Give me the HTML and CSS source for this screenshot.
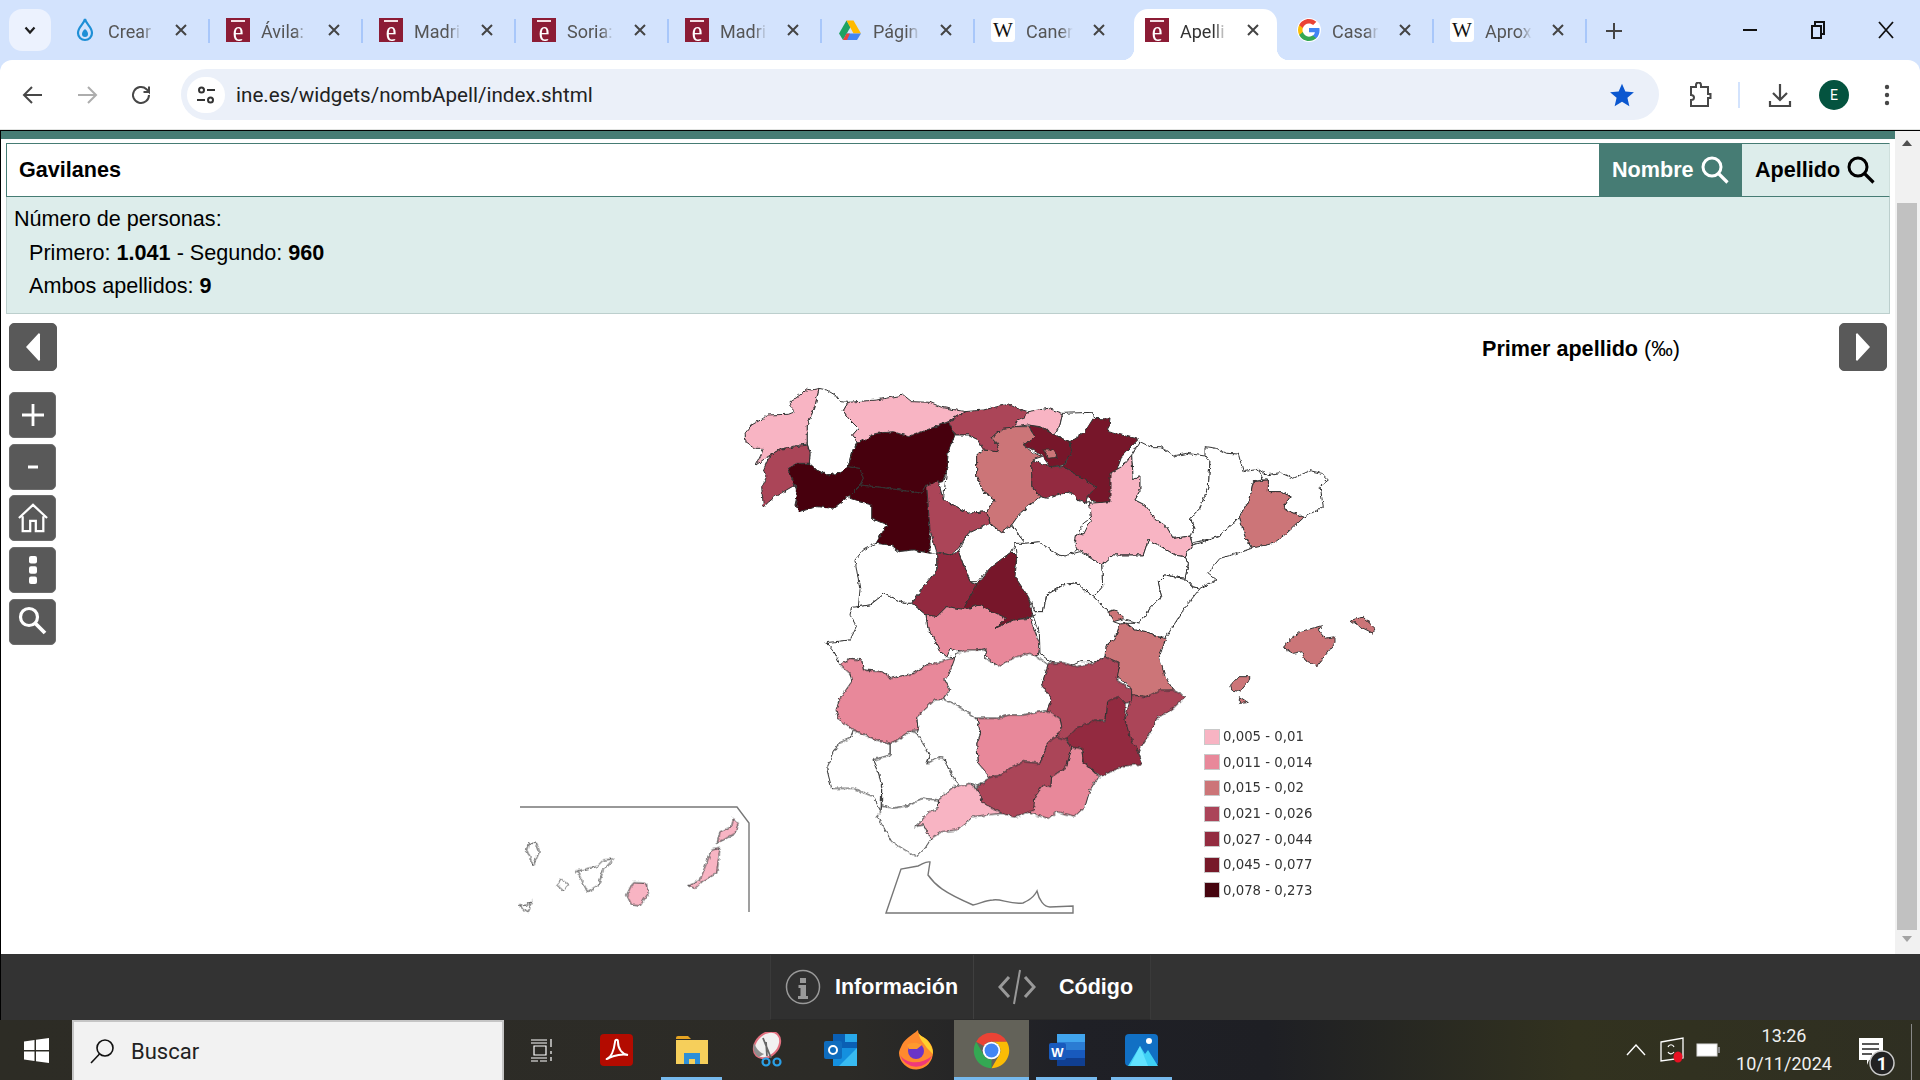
FILE: index.html
```html
<!DOCTYPE html>
<html lang="es">
<head>
<meta charset="utf-8">
<title>Apellidos</title>
<link rel="stylesheet" href="styles.css">
</head>
<body>
<div class="screen">

  <header class="tabstrip">
    <button class="tab-menu"><svg width="16" height="16" viewBox="0 0 16 16"><path d="M3.5 5.5 8 10.5l4.500-5" fill="none" stroke="#1f1f1f" stroke-width="2.200"/></svg></button>
    <div class="tabs">
      <div class="tab sep"><svg class="fav" viewBox="0 0 24 24"><path d="M12 1c1 5 7 8 7 14a7 7 0 0 1-14 0c0-6 6-9 7-14z" fill="none" stroke="#1e8fd6" stroke-width="2.200"/><path d="M12 11c2 2 3 3 3 5a3 3 0 0 1-6 0c0-2 1-3 3-5z" fill="#1e8fd6"/></svg><span class="tab-title">Crear</span><svg class="tab-x" viewBox="0 0 12 12"><path d="M1 1l10 10M11 1 1 11"/></svg></div>
      <div class="tab sep"><span class="fav fav-ine"><span class="fav-e">e</span></span><span class="tab-title">Ávila:</span><svg class="tab-x" viewBox="0 0 12 12"><path d="M1 1l10 10M11 1 1 11"/></svg></div>
      <div class="tab sep"><span class="fav fav-ine"><span class="fav-e">e</span></span><span class="tab-title">Madri</span><svg class="tab-x" viewBox="0 0 12 12"><path d="M1 1l10 10M11 1 1 11"/></svg></div>
      <div class="tab sep"><span class="fav fav-ine"><span class="fav-e">e</span></span><span class="tab-title">Soria:</span><svg class="tab-x" viewBox="0 0 12 12"><path d="M1 1l10 10M11 1 1 11"/></svg></div>
      <div class="tab sep"><span class="fav fav-ine"><span class="fav-e">e</span></span><span class="tab-title">Madri</span><svg class="tab-x" viewBox="0 0 12 12"><path d="M1 1l10 10M11 1 1 11"/></svg></div>
      <div class="tab sep"><svg class="fav" viewBox="0 0 24 24"><path d="M8.500 2.500 1 15.500 5 22 12.500 9z" fill="#1ea362"/><path d="M8.500 2.500h7L23 15.500h-7.500z" fill="#ffba00"/><path d="M8.500 15.500H23L19 22H5z" fill="#4285f4"/><path d="M5 22l3.500-6.500H12L9 22z" fill="#e8473a"/></svg><span class="tab-title">Págin</span><svg class="tab-x" viewBox="0 0 12 12"><path d="M1 1l10 10M11 1 1 11"/></svg></div>
      <div class="tab"><span class="fav fav-wiki">W</span><span class="tab-title">Caner</span><svg class="tab-x" viewBox="0 0 12 12"><path d="M1 1l10 10M11 1 1 11"/></svg></div>
      <div class="tab active"><span class="fav fav-ine"><span class="fav-e">e</span></span><span class="tab-title">Apelli</span><svg class="tab-x" viewBox="0 0 12 12"><path d="M1 1l10 10M11 1 1 11"/></svg></div>
      <div class="tab sep"><svg class="fav fav-g" viewBox="0 0 24 24"><path fill="#4285F4" d="M22.560 12.250c0-.78-.07-1.530-.2-2.250H12v4.260h5.920c-.26 1.370-1.040 2.530-2.210 3.310v2.770h3.570c2.080-1.920 3.280-4.740 3.280-8.090z"/><path fill="#34A853" d="M12 23c2.970 0 5.460-.98 7.280-2.660l-3.570-2.770c-.98.66-2.230 1.060-3.710 1.060-2.860 0-5.290-1.930-6.160-4.530H2.180v2.840C3.990 20.530 7.700 23 12 23z"/><path fill="#FBBC05" d="M5.840 14.090c-.22-.66-.35-1.360-.35-2.090s.13-1.430.35-2.090V7.070H2.180C1.430 8.550 1 10.220 1 12s.43 3.450 1.180 4.930l3.660-2.840z"/><path fill="#EA4335" d="M12 5.380c1.620 0 3.060.56 4.210 1.640l3.150-3.150C17.450 2.090 14.970 1 12 1 7.700 1 3.990 3.470 2.180 7.070l3.660 2.840c.87-2.600 3.300-4.530 6.160-4.530z"/></svg><span class="tab-title">Casar</span><svg class="tab-x" viewBox="0 0 12 12"><path d="M1 1l10 10M11 1 1 11"/></svg></div>
      <div class="tab sep"><span class="fav fav-wiki">W</span><span class="tab-title">Aprox</span><svg class="tab-x" viewBox="0 0 12 12"><path d="M1 1l10 10M11 1 1 11"/></svg></div>
    </div>
    <button class="new-tab"><svg width="20" height="20" viewBox="0 0 20 20"><path d="M10 2v16M2 10h16" stroke="#444" stroke-width="2"/></svg></button>
    <div class="win-controls">
      <span class="win-btn"><svg width="16" height="16" viewBox="0 0 16 16"><path d="M1 8h14" stroke="#111" stroke-width="2"/></svg></span>
      <span class="win-btn"><svg width="16" height="18" viewBox="0 0 16 18"><path d="M2 5h9v12H2zM5 5V1h9v12h-3" fill="none" stroke="#111" stroke-width="2"/></svg></span>
      <span class="win-btn"><svg width="18" height="18" viewBox="0 0 18 18"><path d="M2 1l14 16M16 1 2 17" stroke="#111" stroke-width="1.800"/></svg></span>
    </div>
  </header>

  <nav class="toolbar">
    <span class="nav-btn"><svg width="24" height="24" viewBox="0 0 24 24"><path d="M21 12H4M11 4l-8 8 8 8" fill="none" stroke="#474747" stroke-width="2"/></svg></span>
    <span class="nav-btn"><svg width="24" height="24" viewBox="0 0 24 24"><path d="M3 12h17M13 4l8 8-8 8" fill="none" stroke="#adadad" stroke-width="2"/></svg></span>
    <span class="nav-btn"><svg width="24" height="24" viewBox="0 0 24 24"><path d="M20 12a8 8 0 1 1-2.500-5.800L20 9V3.500M20 9h-5.500" fill="none" stroke="#474747" stroke-width="2"/></svg></span>
    <div class="omnibox">
      <span class="site-info"><svg width="22" height="22" viewBox="0 0 22 22"><circle cx="6.500" cy="6" r="2.500" fill="none" stroke="#333" stroke-width="2"/><path d="M12 6h8M2 16h8" stroke="#333" stroke-width="2"/><circle cx="15.500" cy="16" r="2.500" fill="none" stroke="#333" stroke-width="2"/></svg></span>
      <span class="url">ine.es/widgets/nombApell/index.shtml</span>
      <svg class="star" width="26" height="26" viewBox="0 0 24 24"><path d="M12 1.500l3.100 7.200 7.900.7-6 5.200 1.800 7.700L12 18.200l-6.800 4.100L7 14.600l-6-5.200 7.900-.7z" fill="#0b57d0"/></svg>
    </div>
    <span class="tb-ext"><svg width="26" height="26" viewBox="0 0 26 26"><path d="M4 5h5V3a2.500 2.500 0 0 1 5 0v2h7v7h2.500v4H21v8H4v-6c2 0 3-1 3-2.500S6 13 4 13z" fill="none" stroke="#474747" stroke-width="2"/></svg></span>
    <span class="tb-sep"></span>
    <span class="tb-dl"><svg width="26" height="26" viewBox="0 0 26 26"><path d="M13 2v15M6 11l7 7 7-7M3 19v5h20v-5" fill="none" stroke="#474747" stroke-width="2.200"/></svg></span>
    <span class="avatar">E</span>
    <span class="tb-menu"><svg width="6" height="24" viewBox="0 0 6 24"><circle cx="3" cy="4" r="2.200" fill="#474747"/><circle cx="3" cy="12" r="2.200" fill="#474747"/><circle cx="3" cy="20" r="2.200" fill="#474747"/></svg></span>
  </nav>

  <div class="viewport">
    <div class="viewport-row">
      <main class="page">
        <div class="teal-strip"></div>
        <section class="widget-head">
          <div class="search-row">
            <div class="search-name">Gavilanes</div>
            <div class="search-btn search-on">Nombre
              <svg width="28" height="28" viewBox="0 0 28 28"><circle cx="11" cy="11" r="9" fill="none" stroke="#fff" stroke-width="3"/><path d="M17.500 17.500l9 9" stroke="#fff" stroke-width="3.200"/></svg>
            </div>
            <div class="search-btn search-off">Apellido
              <svg width="28" height="28" viewBox="0 0 28 28"><circle cx="11" cy="11" r="9" fill="none" stroke="#000" stroke-width="3"/><path d="M17.500 17.500l9 9" stroke="#000" stroke-width="3.200"/></svg>
            </div>
          </div>
          <div class="info-box">
            <p class="info-line">Número de personas:</p>
            <p class="info-line indent">Primero: <b>1.041</b> - Segundo: <b>960</b></p>
            <p class="info-line indent">Ambos apellidos: <b>9</b></p>
          </div>
        </section>

        <section class="map-area">
          <svg class="map" viewBox="1 314 1894 640" aria-hidden="true">
            <defs>
              <filter id="rough" filterUnits="userSpaceOnUse" x="480" y="360" width="1000" height="580">
                <feTurbulence type="fractalNoise" baseFrequency="0.22" numOctaves="2" seed="4" result="n"/>
                <feDisplacementMap in="SourceGraphic" in2="n" scale="4" xChannelSelector="R" yChannelSelector="G"/>
              </filter>
            </defs>
            <g filter="url(#rough)">
              <g class="z" transform="translate(720 370) scale(.33333)">
                <polygon class="c1" points="297,55 275,60 262,58 240,75 210,95 215,115 225,125 205,133 140,135 130,145 95,165 75,190 78,215 105,235 130,235 125,250 108,285 140,262 180,238 240,225 262,222 262,165 285,110"/>
                <polygon class="c0" points="297,55 320,60 345,75 360,95 385,97 370,122 385,145 415,175 398,195 415,215 395,245 385,290 360,310 320,315 290,300 268,280 270,250 262,222 262,165 285,110"/>
                <polygon class="c4" points="262,225 180,238 150,255 130,300 140,320 125,350 130,410 165,380 225,345 203,295 230,280 268,280 270,250"/>
                <polygon class="c7" points="203,295 230,282 268,280 290,300 320,315 360,310 385,290 420,295 430,325 420,345 390,375 370,392 340,415 290,410 240,425 225,405 232,375 225,345"/>
                <polygon class="c7" points="415,218 470,190 520,185 565,200 620,180 685,155 705,195 685,245 680,300 668,335 620,345 605,370 540,360 480,352 420,345 430,325 420,295 385,290 395,245"/>
                <polygon class="c7" points="420,345 480,352 540,360 605,370 620,345 630,480 630,550 580,540 535,545 510,525 468,520 500,465 455,445 455,405 420,395 390,385 390,375"/>
                <polygon class="c1" points="385,97 470,90 550,75 575,95 630,97 665,112 735,125 685,155 620,180 565,200 520,185 470,190 415,218 398,195 415,175 385,145 370,122"/>
                <polygon class="c4" points="735,125 790,120 865,102 890,115 925,125 910,145 888,155 888,170 850,175 815,205 835,225 830,245 790,240 775,210 745,195 705,195 685,155"/>
                <polygon class="c1" points="925,125 985,115 1028,130 1020,165 1005,195 960,170 925,165 888,170 888,155 910,145"/>
                <polygon class="c0" points="1028,130 1115,127 1125,145 1095,185 1050,215 1005,195 1020,165"/>
                <polygon class="c6" points="925,165 960,172 1005,195 1050,215 1055,245 1030,285 990,290 965,255 930,235 910,225 945,200"/>
                <polygon class="c3" points="970,240 1000,240 1015,262 985,265"/>
                <polygon class="c6" points="1120,145 1170,147 1165,185 1255,208 1205,260 1180,330 1170,395 1130,400 1100,380 1130,352 1080,320 1030,290 1055,245 1050,215 1095,185"/>
                <polygon class="c5" points="935,270 990,290 1030,290 1080,320 1130,352 1100,380 1100,400 1070,390 1055,365 1010,375 980,385 960,380 935,350"/>
                <polygon class="c0" points="705,195 745,195 775,210 790,240 770,255 770,320 790,365 825,390 800,425 745,430 710,410 670,390 680,300 685,245"/>
                <polygon class="c3" points="850,175 888,170 925,170 945,200 910,225 935,245 965,260 935,270 935,350 960,380 900,430 875,465 845,488 810,460 800,425 825,390 790,365 770,320 770,255 790,240 830,245 835,225 815,205"/>
                <polygon class="c4" points="620,345 655,335 670,390 710,410 745,430 800,425 810,460 745,490 715,535 690,555 650,545 630,480"/>
                <polygon class="c0" points="1115,395 1115,440 1085,465 1075,490 1065,515 1070,540 1040,560 1000,550 960,520 915,520 875,465 900,430 960,380 980,385 1010,375 1055,365 1070,390 1100,400"/>
                <polygon class="c0" points="715,545 745,490 810,460 845,488 875,465 915,520 885,525 875,545 815,590 770,635 750,635"/>
                <polygon class="c5" points="650,548 690,555 715,545 750,635 770,645 730,718 680,710 650,740 618,735 575,700 610,650 650,600"/>
                <polygon class="c0" points="468,520 510,525 535,545 580,540 630,550 650,548 650,600 610,650 575,700 550,700 495,670 450,705 415,710 420,660 405,570 430,540"/>
                <polygon class="c2" points="618,735 650,740 680,710 730,718 780,705 860,745 825,775 880,750 930,745 960,825 955,855 900,870 835,890 800,860 795,835 730,850 690,835 680,860 655,840 640,795 625,785"/>
                <polygon class="c6" points="875,545 890,560 885,610 925,680 940,740 880,750 825,775 860,745 780,705 730,718 770,645 815,590"/>
                <polygon class="c0" points="395,712 415,710 450,705 495,670 550,700 575,700 618,735 625,785 640,795 655,840 680,860 715,865 665,880 620,885 580,910 515,925 485,905 430,900 425,870 390,865 360,885 345,850 318,818 390,810 410,770 390,735"/>
              </g>
              <g class="z" transform="translate(1000 430) scale(.33333)">
                <polygon class="c1" points="395,75 400,150 420,135 420,185 405,210 435,225 465,265 500,290 520,325 570,318 578,345 555,380 525,375 475,345 445,330 430,375 390,375 340,375 305,405 255,370 225,350 230,310 250,315 275,265 268,220 330,215 330,130 365,110"/>
                <polygon class="c0" points="420,35 450,50 480,50 520,78 560,70 615,78 630,95 625,170 600,235 570,265 585,295 570,318 520,325 500,290 465,265 435,225 405,210 420,185 420,135 400,150 395,75"/>
                <polygon class="c0" points="615,50 650,55 680,70 715,72 730,125 775,118 790,150 760,155 750,205 718,260 690,290 655,320 580,338 578,345 570,318 585,295 570,265 600,235 625,170 630,95 615,78"/>
                <polygon class="c0" points="775,118 800,135 840,128 880,145 930,122 965,130 985,150 960,170 970,230 912,262 850,235 870,200 845,185 805,185 805,150 790,150"/>
                <polygon class="c3" points="760,155 805,150 805,185 845,185 870,200 850,235 912,262 860,310 820,340 755,355 735,320 718,260 750,205"/>
                <polygon class="c0" points="718,260 735,320 755,355 695,375 660,385 622,430 648,450 600,475 575,470 555,445 565,400 555,380 578,345 655,320 690,290"/>
                <polygon class="c0" points="305,405 340,375 390,375 430,375 445,330 475,345 525,375 555,380 565,400 555,445 520,440 495,435 475,455 485,500 450,535 435,560 410,580 375,570 340,540 325,545 280,500 308,470"/>
                <polygon class="c0" points="475,455 495,435 520,440 555,445 575,470 600,475 550,540 498,622 470,620 440,605 405,600 380,580 410,580 435,560 450,535 485,500"/>
                <polygon class="c3" points="325,545 345,540 375,565 340,575"/>
                <polygon class="c3" points="360,582 380,580 405,600 440,605 470,620 498,625 478,680 495,740 520,780 480,785 440,800 395,795 390,770 350,740 360,700 315,680 318,650 345,625"/>
                <polygon class="c0" points="45,340 75,340 115,335 185,380 240,365 305,405 308,470 280,500 265,490 230,458 190,465 140,495 130,545 105,545 85,500 45,440 50,390"/>
                <polygon class="c0" points="100,560 105,545 130,545 140,495 190,465 230,458 265,490 280,500 325,545 340,575 360,582 345,625 318,650 315,680 285,695 240,695 205,712 150,695 120,670 118,610"/>
                <polygon class="c3" points="848,650 900,605 965,587 955,600 975,625 1005,620 1005,640 950,708 915,690 905,665 880,670"/>
                <polygon class="c3" points="1052,570 1090,562 1125,595 1120,610 1080,590"/>
                <polygon class="c3" points="692,765 715,740 750,740 745,755 720,785 695,780"/>
                <polygon class="c3" points="718,800 745,818 718,820"/>
              </g>
              <g class="z" transform="translate(810 640) scale(.33333)">
                <polygon class="c4" points="965,165 1010,170 1050,150 1090,150 1125,170 1090,205 1040,235 1025,270 1000,310 985,335 955,285 945,240 955,200"/>
                <polygon class="c2" points="90,75 120,55 155,60 160,90 215,95 245,115 310,100 350,75 395,65 445,50 420,95 405,120 420,150 400,178 375,180 320,232 325,270 300,272 262,300 240,310 200,300 130,270 85,235 78,210 90,175 125,125 120,100"/>
                <polygon class="c0" points="440,40 470,30 530,30 525,55 565,78 620,50 660,40 695,60 715,75 695,135 725,175 710,212 640,225 600,225 560,235 500,235 430,190 400,178 420,150 405,120 420,95"/>
                <polygon class="c4" points="715,70 760,68 800,80 850,70 885,50 930,70 920,120 965,150 965,185 945,190 925,170 890,185 885,240 855,240 800,265 770,300 740,290 755,260 750,235 710,212 725,175 695,135"/>
                <polygon class="c2" points="500,235 560,235 600,225 640,225 710,212 750,235 755,260 740,290 715,305 690,370 640,365 610,378 570,405 540,412 505,370 500,310 512,280"/>
                <polygon class="c2" points="785,322 815,325 820,365 865,410 840,450 825,500 795,528 740,515 715,535 660,520 675,470 700,435 722,440 725,410 770,380"/>
                <polygon class="c5" points="770,295 800,265 855,240 885,245 890,185 925,170 945,190 945,240 960,290 985,335 997,372 940,378 870,410 820,365 815,325 785,322"/>
                <polygon class="c4" points="740,290 770,300 785,322 770,380 725,410 722,440 700,435 675,470 670,510 615,532 575,520 520,490 498,445 540,412 570,405 610,378 640,365 690,370 715,305"/>
                <polygon class="c1" points="498,445 520,490 575,520 485,530 465,550 440,570 395,575 360,598 340,555 315,560 360,515 385,505 385,480 430,440 480,430"/>
                <polygon class="c0" points="320,232 375,180 400,178 430,190 500,235 512,280 500,310 505,370 540,412 498,440 480,430 445,440 420,395 400,355 385,352 350,372 360,345 320,280 325,270"/>
                <polygon class="c0" points="240,310 262,300 300,272 320,280 360,345 350,372 385,352 400,355 420,395 445,435 430,440 385,480 340,475 300,495 250,505 215,495 215,440 205,400 188,360 240,345"/>
                <polygon class="c0" points="130,270 200,300 240,310 240,345 188,360 205,400 215,440 213,515 190,470 130,445 65,445 50,385 85,310 120,295"/>
                <polygon class="c0" points="215,495 250,505 300,495 340,475 385,480 385,505 360,515 315,560 340,555 362,598 345,625 320,650 285,630 245,605 220,560 200,530 213,515"/>
              </g>
              <g class="z" transform="translate(500 790) scale(.33333)">
                <polygon class="c0" points="230,243 290,230 310,210 340,207 310,240 295,285 262,305 245,270"/>
                <polygon class="c1" points="398,278 438,280 445,310 420,348 395,345 380,315"/>
                <polygon class="c1" points="635,180 660,175 650,250 610,272 585,295 565,288 600,270 615,230"/>
                <polygon class="c1" points="700,85 715,100 705,130 670,150 652,158 660,125 695,110"/>
                <polygon class="c0" points="85,160 110,160 118,185 100,227 80,180"/>
                <polygon class="c0" points="185,268 205,285 190,302 170,285"/>
                <polygon class="c0" points="57,348 80,345 95,332 85,365 75,360"/>
              </g>
            </g>
            <g class="frames">
              <polyline points="520,807 737,807 749,823 749,912"/>
              <path d="M886 913 901 869 918 866C923 864 926 861 930 862L928 875C935 885 943 892 973 905 980 904 985 900 993 900 1000 898 1010 905 1023 903 1030 900 1035 895 1037 891 1039 900 1044 907 1050 907L1073 906V913Z"/>
            </g>
          </svg>

          <div class="map-left">
            <button class="tool-btn arrow-btn"><svg width="20" height="30" viewBox="0 0 20 30"><path d="M15 2 3 15l12 13a1 1 0 0 0 2-1V3a1 1 0 0 0-2-1z" fill="#fff"/></svg></button>
            <div class="tool-group">
              <button class="tool-btn"><svg width="24" height="24" viewBox="0 0 24 24"><path d="M12 1v22M1 12h22" stroke="#fff" stroke-width="2.800"/></svg></button>
              <button class="tool-btn"><svg width="14" height="6" viewBox="0 0 14 6"><path d="M2 3h10" stroke="#fff" stroke-width="3"/></svg></button>
              <button class="tool-btn"><svg width="32" height="30" viewBox="0 0 34 32"><path d="M2 16 17 2l15 14M6 14v16h8V19h6v11h8V14" fill="none" stroke="#fff" stroke-width="2.400"/></svg></button>
              <button class="tool-btn"><svg width="10" height="30" viewBox="0 0 10 30"><rect x="1" y="1" width="8" height="7.500" rx="2" fill="#fff"/><rect x="1" y="11.200" width="8" height="7.500" rx="2" fill="#fff"/><rect x="1" y="21.500" width="8" height="7.500" rx="2" fill="#fff"/></svg></button>
              <button class="tool-btn"><svg class="search-tool" width="30" height="30" viewBox="0 0 30 30"><circle cx="12" cy="12" r="8.500" fill="none" stroke="#fff" stroke-width="3.200"/><path d="M18.500 18.500 28 28" stroke="#fff" stroke-width="3.800"/></svg></button>
            </div>
          </div>

          <div class="map-right">
            <h2 class="map-title">Primer apellido <span class="permil">(‰)</span></h2>
            <button class="tool-btn arrow-btn"><svg width="20" height="30" viewBox="0 0 20 30"><path d="M5 2l12 13L5 28a1 1 0 0 1-2-1V3a1 1 0 0 1 2-1z" fill="#fff"/></svg></button>
          </div>

          <ul class="legend">
            <li class="legend-row"><span class="swatch c1"></span>0,005 - 0,01</li>
            <li class="legend-row"><span class="swatch c2"></span>0,011 - 0,014</li>
            <li class="legend-row"><span class="swatch c3"></span>0,015 - 0,02</li>
            <li class="legend-row"><span class="swatch c4"></span>0,021 - 0,026</li>
            <li class="legend-row"><span class="swatch c5"></span>0,027 - 0,044</li>
            <li class="legend-row"><span class="swatch c6"></span>0,045 - 0,077</li>
            <li class="legend-row"><span class="swatch c7"></span>0,078 - 0,273</li>
          </ul>
        </section>
      </main>
      <aside class="scrollbar">
        <span class="sb-up"></span>
        <span class="sb-thumb"></span>
        <span class="sb-down"></span>
      </aside>
    </div>

    <footer class="page-footer">
      <div class="footer-box">
        <div class="footer-item info-item">
          <svg width="36" height="36" viewBox="0 0 36 36"><circle cx="18" cy="18" r="16.500" fill="none" stroke="#999" stroke-width="1.500"/><path d="M15 9h6v5h-6zM13.500 16h7.500v11h2v3h-10v-3h2.500v-8h-2z" fill="#999"/></svg>
          <span>Información</span>
        </div>
        <div class="footer-item code-item">
          <svg width="38" height="36" viewBox="0 0 38 36"><path d="M11 8 2 18l9 10M27 8l9 10-9 10" fill="none" stroke="#999" stroke-width="3"/><path d="M22 1 16 35" stroke="#999" stroke-width="2"/></svg>
          <span>Código</span>
        </div>
      </div>
    </footer>
  </div>

  <div class="taskbar">
    <div class="start"><svg width="25" height="25" viewBox="0 0 25 25"><path d="M0 3.500 10.500 2v10H0zM12 1.800 25 0v12H12zM0 13.500h10.500V23L0 21.500zM12 13.500h13V25l-13-1.800z" fill="#fff"/></svg></div>
    <div class="task-search">
      <svg width="26" height="26" viewBox="0 0 26 26"><circle cx="16" cy="10" r="8" fill="none" stroke="#111" stroke-width="1.600"/><path d="M10.500 16 2 25" stroke="#111" stroke-width="1.600"/></svg>
      <span>Buscar</span>
    </div>
    <div class="task-item"><svg width="24" height="24" viewBox="0 0 24 24"><path d="M1 2h16M1 5h16M4 8h12v9H4zM1 20h16M1 23h7M10 23h7M21 1v8M21 13v3M21 19v4" fill="none" stroke="#fff" stroke-width="1.200"/></svg></div>
    <div class="task-item"><svg width="34" height="32" viewBox="0 0 34 32"><rect width="33" height="32" rx="4" fill="#b30b00"/><path d="M7 25c4-2 7-9 8-17 .3-3 3-3 3 0 0 7 4 12 10 13-5-1-14 0-19 3-2 1-3 1-2 1z" fill="none" stroke="#fff" stroke-width="2"/></svg></div>
    <div class="task-item running"><svg width="32" height="28" viewBox="0 0 32 28"><path d="M0 2a2 2 0 0 1 2-2h10l3 3H0z" fill="#e6a422"/><path d="M0 4h32v24H0z" fill="#f6cf5b"/><path d="M8 28V17h16v11h-5v-5h-6v5z" fill="#2d8fd8"/></svg></div>
    <div class="task-item"><svg width="34" height="36" viewBox="0 0 34 36"><ellipse cx="17" cy="13" rx="15" ry="11" transform="rotate(-45 17 13)" fill="#f1f1f1" stroke="#e2707f" stroke-width="2"/><path d="M4 11c2 5 5 9 10 11l-5 3c-4-2-7-8-5-14z" fill="#8f8f8f"/><path d="M13 6l8 20M17 24 16 10" stroke="#666" stroke-width="1.800" fill="none"/><circle cx="16" cy="30" r="3.500" fill="none" stroke="#2a9fe6" stroke-width="2.200"/><circle cx="27" cy="30" r="3.500" fill="none" stroke="#2a9fe6" stroke-width="2.200"/></svg></div>
    <div class="task-item"><svg width="36" height="32" viewBox="0 0 36 32"><path d="M9 0h24v14H9z" fill="#0a5fb4"/><path d="M21 0h12v8H21z" fill="#28a8ea"/><path d="M9 14h24v18H9z" fill="#1490df"/><path d="M33 14v18H15z" fill="#50d9ff" opacity=".6"/><rect y="7" width="18" height="18" rx="2" fill="#0f6cbd"/><circle cx="9" cy="16" r="4" fill="none" stroke="#fff" stroke-width="2"/></svg></div>
    <div class="task-item"><svg width="35" height="40" viewBox="0 0 35 40"><path d="M2 17C5 9 12 6 19 0c0 4 2 5 5 7 6 3 10 9 10 15a17 17 0 0 1-34 1c0-2 1-4 2-6z" fill="#ff8a2e"/><path d="M19 0c0 6 5 6 9 10 4 4 6 9 6 14l-6-6c-3-5-8-8-9-18z" fill="#ffd12e"/><path d="M1 25c5 8 20 11 32 1a17 17 0 0 1-32-1z" fill="#f0397a"/><circle cx="17" cy="21" r="8" fill="#6a35c8"/><path d="M8 15c4-3 13-3 15 0l-5 4h-8z" fill="#ff9a2e"/></svg></div>
    <div class="task-item active-item"><svg width="37" height="37" viewBox="0 0 48 48"><path d="M24 1a23 23 0 0 1 19.900 11.500H24a11.500 11.500 0 0 0-10 5.750L4.100 12.500A23 23 0 0 1 24 1z" fill="#ea4335"/><path d="M43.900 12.500A23 23 0 0 1 24 47l10-17.250A11.500 11.500 0 0 0 24 12.500z" fill="#fbbc05"/><path d="M24 47A23 23 0 0 1 4.100 12.500L14 29.750A11.500 11.500 0 0 0 24 35.500z" fill="#34a853"/><circle cx="24" cy="24" r="11.500" fill="#fff"/><circle cx="24" cy="24" r="9" fill="#4285f4"/></svg></div>
    <div class="task-item running"><svg width="36" height="32" viewBox="0 0 36 32"><rect x="8" width="28" height="32" rx="2" fill="#2b7cd3"/><path d="M8 0h28v8H8z" fill="#41a5ee"/><path d="M8 16h28v8H8z" fill="#185abd"/><path d="M8 24h28v8H8z" fill="#103f91"/><rect y="9" width="17" height="17" rx="2" fill="#185abd"/><text class="word-w" x="8.500" y="22.500">W</text></svg></div>
    <div class="task-item running"><svg width="33" height="32" viewBox="0 0 33 32"><rect width="33" height="32" rx="4" fill="#1170c4"/><path d="M3 32 15 12l5 8 3-4 10 16z" fill="#3fd0f5"/><path d="M15 12l8 20H5z" fill="#62e3ff"/><circle cx="24" cy="7" r="3" fill="#fff"/></svg></div>
    <div class="tray">
      <span class="tray-item"><svg width="20" height="12" viewBox="0 0 20 12"><path d="M1 11 10 1l9 10" fill="none" stroke="#fff" stroke-width="1.400"/></svg></span>
      <span class="tray-item"><svg width="26" height="26" viewBox="0 0 26 26"><path d="M2 5 24 1v20L2 24z" fill="none" stroke="#fff" stroke-width="1.300"/><path d="M9 10c1-3 5-3 6 0M9 15c1 2 4 3 6 0" fill="none" stroke="#fff" stroke-width="1.200"/><ellipse cx="19" cy="20" rx="4.500" ry="5.500" fill="#e81123"/></svg></span>
      <span class="tray-item"><svg width="24" height="14" viewBox="0 0 24 14"><rect x="1" y="1" width="20" height="12" fill="#fff" stroke="#ddd"/><rect x="22" y="4" width="2" height="6" fill="#888"/></svg></span>
      <div class="clock"><span>13:26</span><span>10/11/2024</span></div>
      <span class="notif"><svg width="40" height="40" viewBox="0 0 40 40"><path d="M1 1h24v22H11l-2 5v-5H1z" fill="#fff"/><path d="M4 7h17M4 12h17M4 17h10" stroke="#222" stroke-width="1.600"/><circle cx="24" cy="26" r="12" fill="#222" stroke="#ccc" stroke-width="1.500"/><text class="notif-num" x="24" y="32.500">1</text></svg></span>
      <span class="show-desktop"></span>
    </div>
  </div>
</div>
</body>
</html>
```
FILE: styles.css
```css
* { box-sizing: border-box; }
html, body { margin: 0; padding: 0; }
body { width: 1920px; height: 1080px; overflow: hidden; font-family: "Liberation Sans", Arial, sans-serif; background: #fff; }
button { border: 0; padding: 0; margin: 0; font: inherit; }
.screen { width: 1920px; height: 1080px; display: flex; flex-direction: column; overflow: hidden; background: #d3e3fd; }

/* browser tabs */
.tabstrip { height: 60px; flex: none; display: flex; background: #d3e3fd; }
.tab-menu { width: 42px; height: 42px; margin: 9px 10px 0 9px; border-radius: 13px; background: #ecf2fe; display: flex; align-items: center; justify-content: center; }
.tabs { display: flex; }
.tab { position: relative; width: 153px; height: 51px; margin-top: 9px; padding: 0 0 9px 12px; display: flex; align-items: center; font: 18px Roboto, sans-serif; color: #555; }
.tab.sep::after { content: ""; position: absolute; right: 4px; top: 10px; width: 2px; height: 24px; background: #a8c7fa; }
.tab.active { width: 143px; margin-left: 2px; margin-right: 8px; padding-left: 11px; background: #fff; border-radius: 14px 14px 0 0; color: #333; }
.tab.active::before, .tab.active::after { content: ""; position: absolute; bottom: 0; width: 12px; height: 12px; }
.tab.active::before { left: -12px; background: radial-gradient(circle at 0 0, transparent 12px, #fff 12.500px); }
.tab.active::after { right: -12px; background: radial-gradient(circle at 100% 0, transparent 12px, #fff 12.500px); }
.fav { flex: none; width: 24px; height: 24px; display: block; }
.fav-ine { position: relative; background: #8c1c35; color: #fff; overflow: hidden; font-family: "Liberation Serif", serif; text-align: center; }
.fav-ine::before { content: ""; position: absolute; left: 5px; right: 5px; top: 2px; height: 2px; background: #f3dfe3; }
.fav-e { display: block; font-size: 24px; line-height: 20px; margin-top: 3px; transform: scale(1, 1.250); transform-origin: 50% 50%; }
.fav-wiki { background: #fff; border-radius: 4px; color: #111; font: 21px/25px "Liberation Serif", serif; text-align: center; }
.fav-g { background: #fff; border-radius: 12px; }
.tab-title { width: 47px; margin: 2px 0 0 11px; white-space: nowrap; overflow: visible; -webkit-mask-image: linear-gradient(90deg, #000 72%, transparent 100%); mask-image: linear-gradient(90deg, #000 72%, transparent 100%); }
.tab-x { flex: none; width: 12px; height: 12px; margin-left: 20px; fill: none; stroke: #444; stroke-width: 2; }
.new-tab { width: 30px; height: 30px; margin: 16px 0 0 8px; background: none; display: flex; align-items: center; justify-content: center; }
.win-controls { margin-left: auto; display: flex; }
.win-btn { width: 68px; height: 60px; display: flex; align-items: center; justify-content: center; }

/* toolbar */
.toolbar { height: 70px; flex: none; padding-left: 6px; display: flex; align-items: center; background: #fff; border-radius: 12px 12px 0 0; border-bottom: 1px solid #e1e3e1; }
.nav-btn { width: 54px; display: flex; justify-content: center; }
.omnibox { width: 1478px; height: 51px; margin-left: 13px; padding: 0 24px 0 6px; display: flex; align-items: center; background: #ebf0f9; border-radius: 26px; }
.site-info { width: 38px; height: 36px; background: #fff; border-radius: 18px; display: flex; align-items: center; justify-content: center; }
.url { flex: 1; margin-left: 11px; font: 20.600px Roboto, sans-serif; color: #222; }
.star { flex: none; }
.tb-ext { width: 50px; margin-left: 16px; display: flex; justify-content: center; }
.tb-sep { width: 2px; height: 26px; margin-left: 13px; background: #d3e3fd; }
.tb-dl { width: 50px; margin-left: 15px; display: flex; justify-content: center; }
.avatar { width: 30px; height: 30px; margin-left: 14px; border-radius: 50%; background: #04533f; color: #fff; font: 14px/30px Roboto, sans-serif; text-align: center; }
.tb-menu { width: 20px; margin-left: 28px; display: flex; justify-content: center; }

/* page */
.viewport { flex: none; height: 890px; display: flex; flex-direction: column; background: #fff; border-top: 1px solid #000; border-left: 1px solid #000; }
.viewport-row { flex: 1; min-height: 0; display: flex; }
.page { flex: 1; min-width: 0; display: flex; flex-direction: column; background: #fff; }
.teal-strip { height: 8px; flex: none; background: #467c74; }
.widget-head { flex: none; margin: 4px 5px 0; }
.search-row { height: 54px; display: flex; border: 1px solid #467c74; border-right-color: #cfe0dd; background: #fff; }
.search-name { flex: 1; padding-left: 12px; font: bold 21.600px/52px "Liberation Sans", sans-serif; color: #000; }
.search-btn { display: flex; align-items: center; gap: 7px; font: bold 21.600px "Liberation Sans", sans-serif; }
.search-on { width: 143px; padding-left: 13px; background: #467c74; color: #fff; }
.search-off { width: 147px; padding-left: 13px; background: #ddedeb; color: #000; }
.info-box { height: 117px; padding: 5px 0 0 7px; background: #ddedeb; border: 1px solid #bccfcd; border-top: 0; font-size: 21.600px; color: #000; }
.info-line { margin: 0; line-height: 33.500px; }
.indent { padding-left: 15px; }

.map-area { flex: 1; min-height: 0; position: relative; display: flex; justify-content: space-between; align-items: flex-start; padding: 9px 8px 0; }
.map { position: absolute; left: 0; top: 0; width: 1894px; height: 640px; display: block; }
.z polygon { stroke: #333; stroke-width: 1px; vector-effect: non-scaling-stroke; stroke-linejoin: round; }
.frames polyline, .frames path { fill: #fff; fill-opacity: 0; stroke: #777; stroke-width: 1.400px; }
.c0 { fill: #fff; background: #fff; }
.c1 { fill: #f8b4c3; background: #f8b4c3; }
.c2 { fill: #e8889a; background: #e8889a; }
.c3 { fill: #cc7578; background: #cc7578; }
.c4 { fill: #ab4459; background: #ab4459; }
.c5 { fill: #932c40; background: #932c40; }
.c6 { fill: #771929; background: #771929; }
.c7 { fill: #46040f; background: #46040f; }
.map-left { position: relative; display: flex; flex-direction: column; gap: 21px; }
.map-right { position: relative; display: flex; align-items: flex-start; gap: 159px; }
.tool-group { display: flex; flex-direction: column; gap: 5.700px; }
.tool-btn { width: 47px; height: 46px; display: flex; align-items: center; justify-content: center; background: #595959; border-radius: 5px; border: 1px solid #6c6c6c; }
.arrow-btn { width: 48px; height: 48px; border-color: #595959; }
.search-tool { margin: -3px 0 0 -2px; }
.map-title { margin: 12px 0 0; font: bold 21.600px/28px "Liberation Sans", sans-serif; color: #000; }
.permil { font-weight: normal; }
.legend { position: absolute; left: 1203px; top: 410px; margin: 0; padding: 0; list-style: none; }
.legend-row { height: 25.600px; display: flex; align-items: center; gap: 3px; font: 13.300px "DejaVu Sans", sans-serif; color: #333; }
.swatch { width: 16px; height: 16px; border: 1px solid #c9c9c9; }

.scrollbar { width: 25px; flex: none; position: relative; display: flex; flex-direction: column; align-items: center; background: #f1f1f1; padding: 9px 3px 0 2px; }
.sb-up { width: 0; height: 0; border: 5px solid transparent; border-top: 0; border-bottom: 6px solid #505050; }
.sb-thumb { width: 100%; height: 727px; margin-top: 57px; background: #c1c1c1; }
.sb-down { width: 0; height: 0; margin-top: 6px; border: 5px solid transparent; border-bottom: 0; border-top: 6px solid #a3a3a3; }

.page-footer { height: 66px; flex: none; display: flex; justify-content: center; background: #333; }
.footer-box { display: flex; height: 65px; margin-top: 1px; background: #303030; border: 1px solid #3a3a3a; border-bottom-color: #2a2a2a; border-top: 0; }
.footer-item { height: 100%; display: flex; align-items: center; color: #fff; font: bold 21.500px "Liberation Sans", sans-serif; }
.info-item { width: 203px; padding-left: 14px; gap: 14px; border-right: 1px solid #3f3f3f; }
.code-item { width: 176px; padding-left: 24px; gap: 23px; }

/* windows taskbar */
.taskbar { flex: 1; min-height: 0; display: flex; align-items: stretch; background: linear-gradient(90deg, #2d2c25 0%, #2c2b27 44%, #1f2026 56%, #1e1f24 66%, #32321f 82%, #2f2f22 100%); color: #fff; }
.start { width: 72px; flex: none; display: flex; align-items: center; justify-content: center; }
.task-search { width: 432px; flex: none; padding-left: 15px; display: flex; align-items: center; gap: 16px; background: #f2f2f2; border-top: 2px solid #c5c5c5; border-left: 2px solid #c5c5c5; border-right: 2px solid #c5c5c5; font: 22px Roboto, sans-serif; color: #222; }
.task-item { width: 75px; flex: none; position: relative; display: flex; align-items: center; justify-content: center; }
.task-item.running::after { content: ""; position: absolute; left: 7px; right: 7px; bottom: 0; height: 3px; background: #76b9ed; }
.active-item { background: #636259; }
.active-item::after { content: ""; position: absolute; left: 0; right: 0; bottom: 0; height: 3px; background: #76b9ed; }
.word-w { font: bold 13px "Liberation Sans", sans-serif; fill: #fff; text-anchor: middle; }
.tray { margin-left: auto; display: flex; align-items: center; height: 100%; }
.tray-item { width: 36px; display: flex; align-items: center; justify-content: center; }
.clock { width: 116px; display: flex; flex-direction: column; align-items: center; gap: 6px; font: 18px/22px Roboto, sans-serif; color: #f0f0f0; }
.notif { width: 56px; padding: 14px 0 0 16px; display: flex; }
.notif-num { font: bold 18px Roboto, sans-serif; fill: #fff; text-anchor: middle; }
.show-desktop { width: 22px; height: 100%; position: relative; }
.show-desktop::before { content: ""; position: absolute; left: 13px; top: 4px; bottom: 0; width: 1px; background: #888; }
```
